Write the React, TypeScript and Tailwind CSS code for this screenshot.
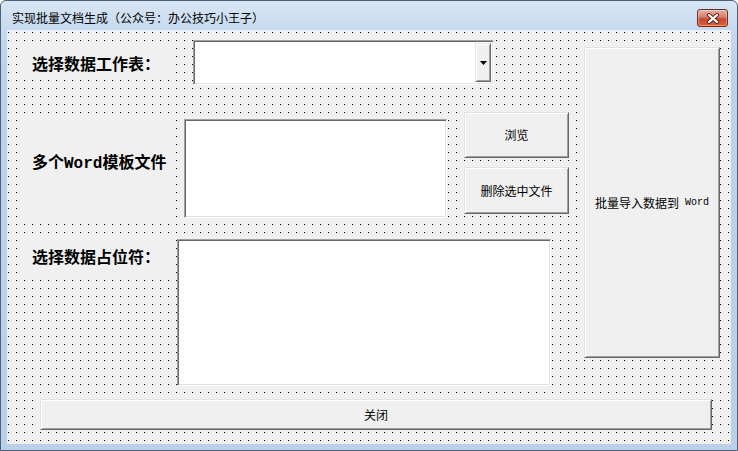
import { type FC, type ReactNode } from "react"

const cjk = "font-['Noto_Sans_CJK_SC','Liberation_Sans',sans-serif]"
const mixed = "font-['Liberation_Mono','Noto_Sans_CJK_SC',monospace]"

const raised =
    "border border-t-[#e3e3e3] border-l-[#e3e3e3] border-r-[#696969] border-b-[#696969] shadow-[inset_1px_1px_0_#fff,inset_-1px_-1px_0_#a0a0a0] bg-[#f0f0f0]"
const sunken =
    "border border-t-[#a0a0a0] border-l-[#a0a0a0] border-r-white border-b-white shadow-[inset_1px_1px_0_#696969,inset_-1px_-1px_0_#e3e3e3] bg-white"

interface ButtonProps {
    className: string
    children: ReactNode
}

const FormButton: FC<ButtonProps> = ({ className, children }) => (
    <div
        className={`${raised} ${className} flex shrink-0 items-center justify-center text-[12px] leading-[16px] text-black`}
    >
        {children}
    </div>
)

const CloseGlyph: FC = () => (
    <svg width="14" height="11" viewBox="0 0 14 11">
        <path d="M3 2 L11 9 M11 2 L3 9" stroke="#5a2418" strokeWidth="4" strokeLinecap="round" />
        <path d="M3 2 L11 9 M11 2 L3 9" stroke="#fff" strokeWidth="2.2" strokeLinecap="round" />
    </svg>
)

const App: FC = () => {
    return (
        <div className="h-[451px] w-[738px] overflow-hidden bg-white">
            <div className="flex h-[451px] w-[738px] flex-col rounded-t-[6px] border border-[#4d6178] bg-[linear-gradient(#d9e6f4,#c6d9ee_30px,#bdd3ec_60px,#b9d0ea)]">
                {/* title bar */}
                <div className="flex h-[29px] shrink-0 items-center pt-[5px] pl-[11px]">
                    <span className={`${cjk} text-[12px] leading-[16px] text-black`}>
                        实现批量文档生成（公众号：办公技巧小王子）
                    </span>
                    <div className="mt-[3px] mr-[9px] ml-auto flex h-[18px] w-[31px] items-center justify-center self-start rounded-[3px] border border-[#6e2b1f] bg-[linear-gradient(#eab0a4,#db7a66_45%,#c6472d_55%,#d4643f)] shadow-[inset_0_0_0_1px_rgba(255,255,255,0.35)]">
                        <CloseGlyph />
                    </div>
                </div>

                {/* client area */}
                <div className="mx-[6px] flex h-[414px] w-[724px] shrink-0 flex-col bg-[#f0f0f0] bg-[image:conic-gradient(at_1px_1px,transparent_75%,#000_0)] bg-[length:8px_8px] bg-[position:1px_2px] pt-[10px]">
                    <div className="flex h-[346px]">
                        <div className="flex w-[577px] shrink-0 flex-col">
                            {/* row 1 */}
                            <div className="flex h-[45px] items-center">
                                <div className="ml-[17px] flex h-[35px] w-[148px] items-center bg-[#f0f0f0] pl-[8px]">
                                    <span className={`${cjk} text-[16px] leading-[20px] font-bold text-black`}>
                                        选择数据工作表：
                                    </span>
                                </div>
                                <div className={`${sunken} ml-[21px] flex h-[45px] w-[301px] justify-end p-[2px]`}>
                                    <div className={`${raised} flex h-full w-[16px] items-center justify-center`}>
                                        <svg width="7" height="4" viewBox="0 0 7 4">
                                            <polygon points="0,0 7,0 3.5,4" fill="#000" />
                                        </svg>
                                    </div>
                                </div>
                            </div>

                            {/* row 2 */}
                            <div className="mt-[27px] flex items-start">
                                <div className="mt-[6px] ml-[17px] h-[102px] w-[152px] bg-[#f0f0f0] pt-[32px] pl-[8px]">
                                    <span className={`${mixed} text-[16px] leading-[20px] font-bold text-black`}>
                                        多个Word模板文件
                                    </span>
                                </div>
                                <div className={`${sunken} mt-[7px] ml-[8px] h-[99px] w-[263px]`} />
                                <div className="ml-[17px] flex w-[105px] flex-col gap-[9px]">
                                    <FormButton className={`${cjk} h-[46px] w-[105px]`}>浏览</FormButton>
                                    <FormButton className={`${cjk} h-[47px] w-[105px]`}>删除选中文件</FormButton>
                                </div>
                            </div>

                            {/* row 3 */}
                            <div className="mt-[19px] flex items-start">
                                <div className="mt-[1px] ml-[17px] h-[35px] w-[146px] bg-[#f0f0f0] pt-[5px] pl-[8px]">
                                    <span className={`${cjk} text-[16px] leading-[20px] font-bold text-black`}>
                                        选择数据占位符：
                                    </span>
                                </div>
                                <div className={`${sunken} ml-[7px] h-[147px] w-[374px]`} />
                            </div>
                        </div>

                        <FormButton className={`${cjk} mt-[7px] h-[311px] w-[136px]`}>
                            批量导入数据到
                            <span className="ml-[6px] font-['Liberation_Mono',monospace] text-[10px]">Word</span>
                        </FormButton>
                    </div>

                    <FormButton className={`${cjk} mt-[13px] ml-[33px] h-[31px] w-[672px]`}>关闭</FormButton>
                </div>
            </div>
        </div>
    )
}

export default App
